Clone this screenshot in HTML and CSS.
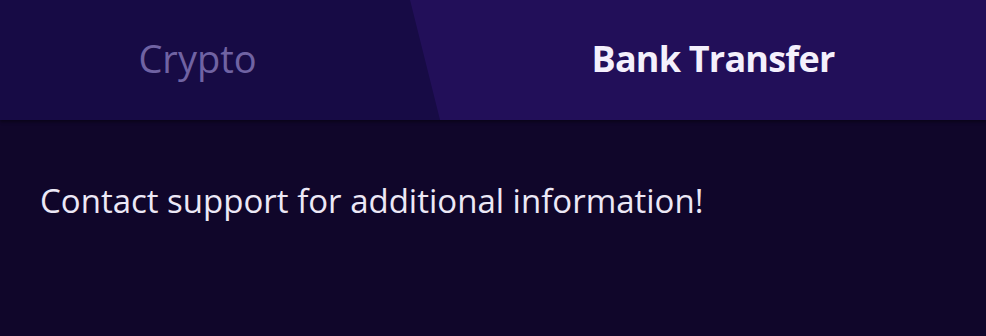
FILE: index.html
```html
<!DOCTYPE html>
<html lang="en">
<head>
    <meta charset="UTF-8">
    <meta name="viewport" content="width=device-width, initial-scale=1.0">
    <title>Deposit</title>
    <link rel="stylesheet" href="styles.css">
</head>
<body>
    <div class="deposit-panel">
        <div class="tabs">
            <div class="tab tab-crypto">Crypto</div>
            <div class="tab tab-bank">Bank Transfer</div>
        </div>
        <div class="panel-body">
            <p class="info">Contact support for additional information!</p>
        </div>
    </div>
</body>
</html>
```

FILE: styles.css
```css
body {
    margin: 0;
    font-family: 'Open Sans', 'Noto Sans', sans-serif;
    background-color: #10062a;
}

.deposit-panel {
    width: 986px;
    height: 336px;
    background-color: #10062a;
}

.tabs {
    display: flex;
    height: 120px;
    background-color: #170b45;
    box-shadow: 0 2px 3px rgba(0, 0, 0, 0.4);
}

.tab {
    display: flex;
    align-items: center;
    justify-content: center;
    padding-bottom: 4px;
}

.tab-crypto {
    width: 395px;
    padding-right: 15px;
    font-size: 38px;
    color: #7063a3;
}

.tab-bank {
    flex: 1;
    padding-left: 30px;
    background-color: #220f59;
    color: #f4f0fc;
    font-size: 36px;
    font-weight: 700;
    letter-spacing: -0.8px;
    clip-path: polygon(0 0, 100% 0, 100% 100%, 30px 100%);
}

.panel-body {
    padding: 0 40px;
}

.info {
    margin: 0;
    padding-top: 58px;
    font-size: 33px;
    color: #ece8f6;
}
```
